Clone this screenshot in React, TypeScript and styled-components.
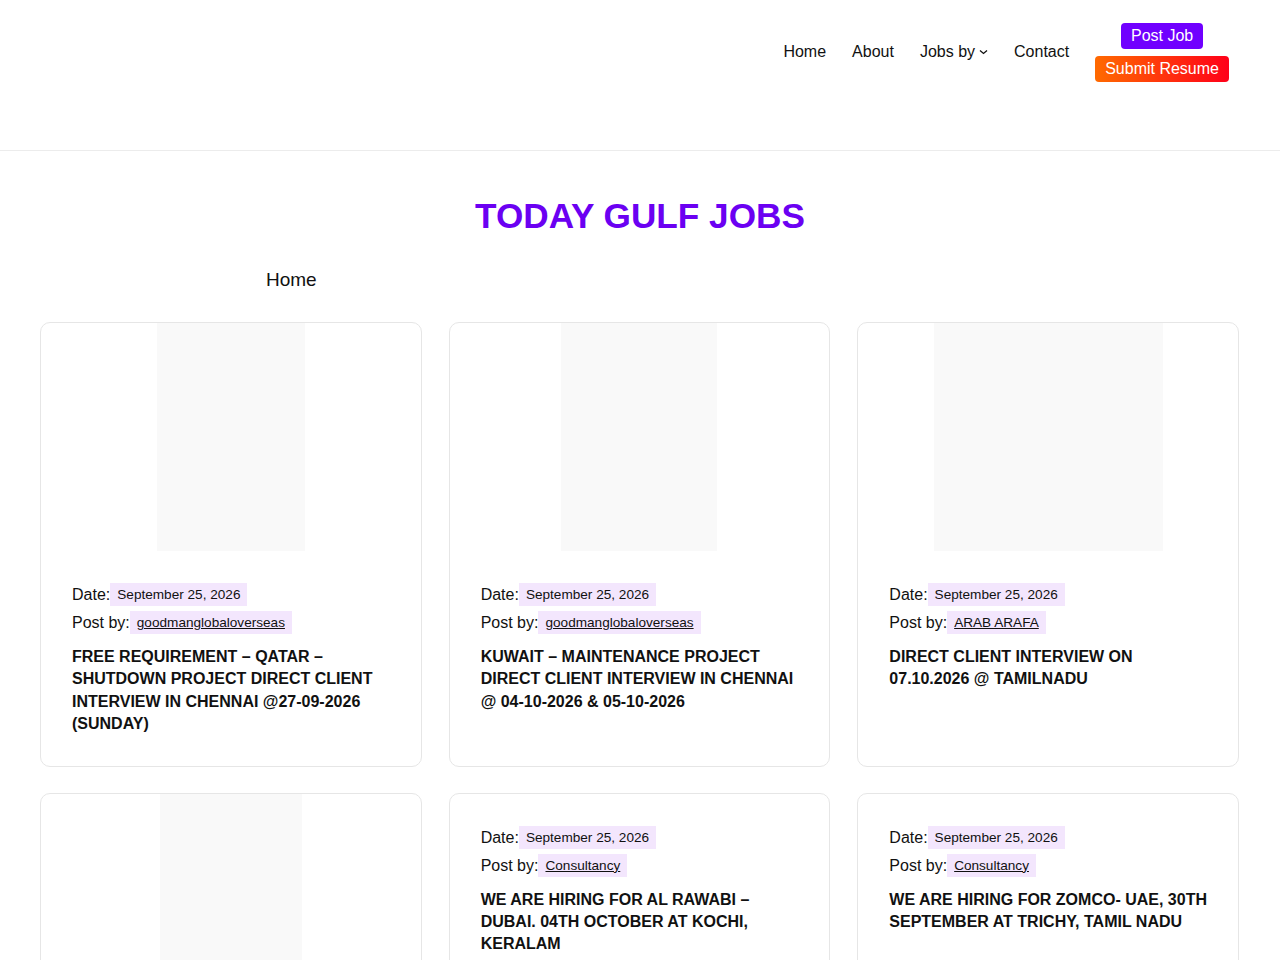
import React from "react";
import styled, { createGlobalStyle } from "styled-components";

const GlobalStyle = createGlobalStyle`
  body {
    margin: 0;
    background: #fff;
    font-family: "Liberation Sans", Arial, Helvetica, sans-serif;
    color: #111;
  }
`;

const Header = styled.header`
  height: 151px;
  box-sizing: border-box;
  border-bottom: 1px solid #ececec;
  display: flex;
  justify-content: flex-end;
  align-items: flex-start;
  padding: 23px 51px 0 0;
  gap: 26px;
`;

const Nav = styled.nav`
  display: flex;
  align-items: center;
  gap: 26px;
  height: 57px;
`;

const NavLink = styled.a`
  font-size: 16px;
  color: #111;
  text-decoration: none;
  display: flex;
  align-items: center;
  gap: 4px;
`;

const Actions = styled.div`
  display: flex;
  flex-direction: column;
  align-items: center;
  gap: 7px;
`;

const ActionButton = styled.a<{ $bg: string }>`
  display: inline-block;
  height: 26px;
  line-height: 26px;
  padding: 0 10px;
  border-radius: 4px;
  font-size: 16px;
  color: #fff;
  text-decoration: none;
  background: ${(p) => p.$bg};
`;

const Title = styled.h1`
  margin: 0;
  padding-top: 45px;
  text-align: center;
  font-size: 35.2px;
  font-weight: 700;
  color: #6b00f2;
  line-height: 40px;
`;

const Crumbs = styled.div`
  padding: 33px 0 0 266px;
  font-size: 19px;
  line-height: 22px;
`;

const Grid = styled.main`
  display: grid;
  grid-template-columns: repeat(3, 1fr);
  column-gap: 27px;
  row-gap: 26px;
  padding: 31px 41px 40px 40px;
`;

const Card = styled.article`
  border: 1px solid #e6e6e6;
  border-radius: 10px;
  overflow: hidden;
  display: flex;
  flex-direction: column;
`;

const Thumb = styled.div<{ $w: number }>`
  width: ${(p) => p.$w}px;
  height: 228px;
  margin: 0 auto;
  background: #f9f9f9;
`;

const Body = styled.div`
  padding: 32px 31px 30px;
`;

const Meta = styled.div`
  display: flex;
  align-items: center;
  font-size: 16px;
  line-height: 23px;
  margin-bottom: 5px;
`;

const Tag = styled.span`
  display: inline-block;
  background: #f3e6fd;
  padding: 4px 7px;
  font-size: 13.6px;
  line-height: 15px;
  color: #111;
`;

const TagLink = styled(Tag).attrs({ as: "a" })`
  text-decoration: underline;
`;

const JobTitle = styled.h2`
  margin: 12px 0 0;
  font-size: 16px;
  font-weight: 700;
  line-height: 22.4px;
  text-transform: uppercase;
  color: #111;
`;

type Job = {
  thumb?: number;
  by: string;
  title: string;
};

const jobs: Job[] = [
  {
    thumb: 148,
    by: "goodmanglobaloverseas",
    title:
      "FREE REQUIREMENT – QATAR – SHUTDOWN PROJECT DIRECT CLIENT INTERVIEW IN CHENNAI @27-09-2026 (SUNDAY)",
  },
  {
    thumb: 156,
    by: "goodmanglobaloverseas",
    title:
      "KUWAIT – MAINTENANCE PROJECT DIRECT CLIENT INTERVIEW IN CHENNAI @ 04-10-2026 & 05-10-2026",
  },
  {
    thumb: 229,
    by: "ARAB ARAFA",
    title: "DIRECT CLIENT INTERVIEW ON 07.10.2026 @ TAMILNADU",
  },
  {
    thumb: 142,
    by: "Consultancy",
    title: "WE ARE HIRING – OVERSEAS DIRECT INTERVIEW",
  },
  {
    by: "Consultancy",
    title: "WE ARE HIRING FOR AL RAWABI – DUBAI. 04TH OCTOBER AT KOCHI, KERALAM",
  },
  {
    by: "Consultancy",
    title: "WE ARE HIRING FOR ZOMCO- UAE, 30TH SEPTEMBER AT TRICHY, TAMIL NADU",
  },
];

const Chevron = () => (
  <svg width="9" height="6" viewBox="0 0 9 6" fill="none">
    <path d="M1 1.5 L4.5 4.5 L8 1.5" stroke="#111" strokeWidth="1.3" />
  </svg>
);

export default function App() {
  return (
    <>
      <GlobalStyle />
      <Header>
        <Nav>
          <NavLink href="#">Home</NavLink>
          <NavLink href="#">About</NavLink>
          <NavLink href="#">
            Jobs by <Chevron />
          </NavLink>
          <NavLink href="#">Contact</NavLink>
        </Nav>
        <Actions>
          <ActionButton href="#" $bg="#7000ff">
            Post Job
          </ActionButton>
          <ActionButton href="#" $bg="linear-gradient(90deg, #ff6a00, #ff0019)">
            Submit Resume
          </ActionButton>
        </Actions>
      </Header>
      <Title>TODAY GULF JOBS</Title>
      <Crumbs>Home</Crumbs>
      <Grid>
        {jobs.map((job, i) => (
          <Card key={i}>
            {job.thumb && <Thumb $w={job.thumb} />}
            <Body>
              <Meta>
                Date:<Tag>September 25, 2026</Tag>
              </Meta>
              <Meta>
                Post by:<TagLink href="#">{job.by}</TagLink>
              </Meta>
              <JobTitle>{job.title}</JobTitle>
            </Body>
          </Card>
        ))}
      </Grid>
    </>
  );
}
